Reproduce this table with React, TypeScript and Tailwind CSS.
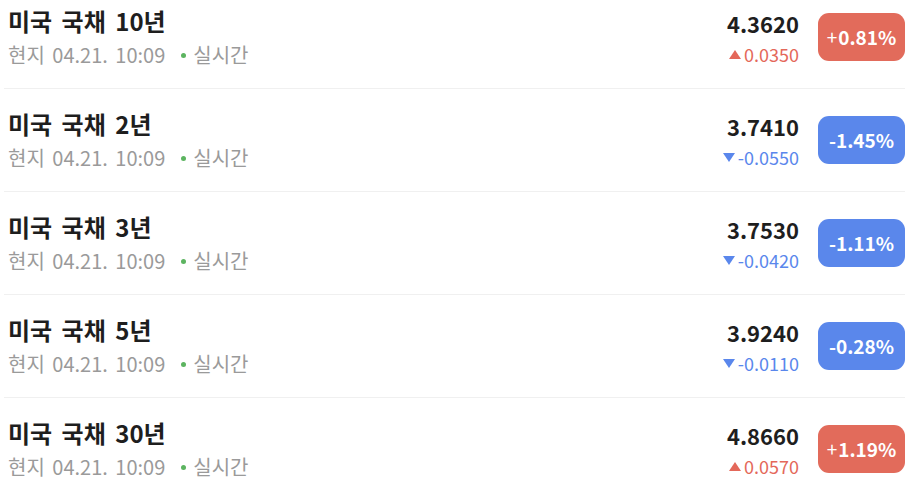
const rows = [
  { term: "10년", price: "4.3620", diff: "0.0350", rate: "0.81%", up: true },
  { term: "2년", price: "3.7410", diff: "-0.0550", rate: "-1.45%", up: false },
  { term: "3년", price: "3.7530", diff: "-0.0420", rate: "-1.11%", up: false },
  { term: "5년", price: "3.9240", diff: "-0.0110", rate: "-0.28%", up: false },
  { term: "30년", price: "4.8660", diff: "0.0570", rate: "1.19%", up: true },
];

function Triangle({ up }: { up: boolean }) {
  return (
    <svg width="12" height="9" viewBox="0 0 12 9" className="mr-[3px]">
      {up ? <polygon points="6,0 12,9 0,9" fill="#e4685a" /> : <polygon points="0,0 12,0 6,9" fill="#5a87ec" />}
    </svg>
  );
}

export default function App() {
  return (
    <div className="w-[910px] h-[484px] overflow-hidden bg-white font-['Noto_Sans_CJK_KR','Noto_Sans',sans-serif]">
      <div className="-mt-[14px] pl-[4px] pr-[5px]">
        {rows.map((r) => (
          <div key={r.term} className="flex items-center justify-between h-[103px] border-b border-[#f0f0f0]">
            <div className="pl-[4px] flex flex-col gap-[6px]">
              <div className="text-[24px] leading-[30px] font-bold text-[#1e1e1e] [word-spacing:4px]">미국 국채 {r.term}</div>
              <div className="flex items-center text-[20px] leading-[26px] text-[#9a9a9a]">
                <span className="[word-spacing:3px]">현지 04.21. 10:09</span>
                <span className="ml-[16px] mr-[7px] w-[5px] h-[5px] rounded-full bg-[#5cb460]" />
                <span>실시간</span>
              </div>
            </div>
            <div className="flex items-center">
              <div className="flex flex-col items-end gap-[4px]">
                <div className="text-[22px] leading-[30px] font-bold text-[#1e1e1e]">{r.price}</div>
                <div className={`flex items-center text-[18px] leading-[24px] ${r.up ? "text-[#e4685a]" : "text-[#5a87ec]"}`}>
                  <Triangle up={r.up} />
                  <span>{r.diff}</span>
                </div>
              </div>
              <div
                className={`ml-[19px] w-[87px] h-[48px] rounded-[11px] flex items-center justify-center text-white text-[19px] font-bold ${
                  r.up ? "bg-[#e26b5b]" : "bg-[#5a87eb]"
                }`}
              >
                {r.up && <span className="font-normal mr-[1px]">+</span>}
                {r.rate}
              </div>
            </div>
          </div>
        ))}
      </div>
    </div>
  );
}
